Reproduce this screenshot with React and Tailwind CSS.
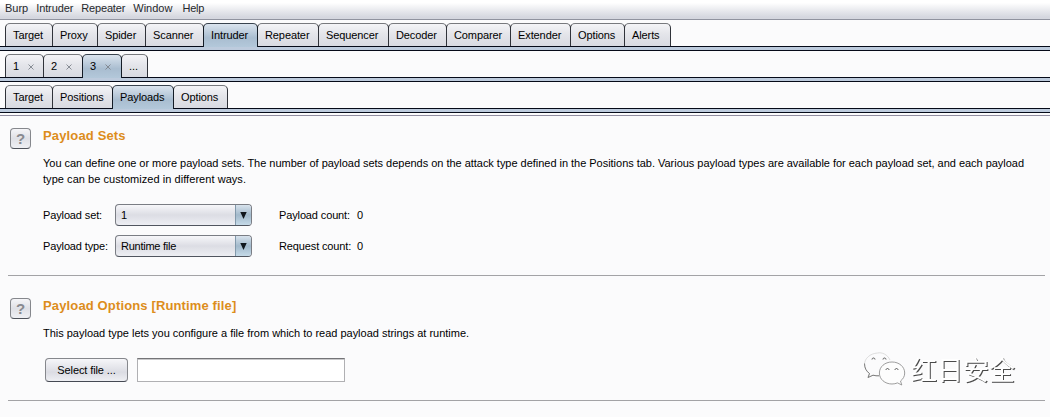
import React from "react";

const mainTabs = [
  ["Target", "w-[48px]"],
  ["Proxy", "w-[46px]"],
  ["Spider", "w-[49px]"],
  ["Scanner", "w-[59px]"],
  ["Intruder", "w-[55px]"],
  ["Repeater", "w-[62px]"],
  ["Sequencer", "w-[71px]"],
  ["Decoder", "w-[59px]"],
  ["Comparer", "w-[65px]"],
  ["Extender", "w-[61px]"],
  ["Options", "w-[55px]"],
  ["Alerts", "w-[47px]"],
];
const attackTabs = [
  ["1", "w-[39px]", true],
  ["2", "w-[40px]", true],
  ["3", "w-[40px]", true],
  ["...", "w-[27px]"],
];
const subTabs = [
  ["Target", "w-[48px]"],
  ["Positions", "w-[61px]"],
  ["Payloads", "w-[62px]"],
  ["Options", "w-[55px]"],
];

function Tab({ label, width, closable, active }) {
  return (
    <div
      className={`${width} -mr-px flex shrink-0 items-center rounded-t-[5px] border border-b-0 pl-[7px] tracking-[-0.1px] ${
        active
          ? "z-10 h-6 border-x-[#141c26] border-t-[#39434e] bg-linear-to-b from-[#dbe4ee] via-[#a9bdd0] via-60% to-[#b3c8da]"
          : "h-[23px] border-x-[#30333a] border-t-[#77797d] bg-linear-to-b from-[#f4f4f7] via-[#e4e5ea] via-45% to-[#d8dae1]"
      }`}
    >
      <span className={active ? "-mt-px" : ""}>{label}</span>
      {closable && (
        <svg className="mt-px ml-[9px] h-[6px] w-[6px]" viewBox="0 0 6 6">
          <path d="M.5.5l5 5M5.5.5l-5 5" stroke="#7d828a" strokeWidth=".9" />
        </svg>
      )}
    </div>
  );
}

function TabRow({ tabs, active }) {
  return (
    <div className="h-[31px] pt-[3px]">
      <div className="flex h-[23px] items-start pl-[5px]">
        {tabs.map(([label, width, closable]) => (
          <Tab key={label} label={label} width={width} closable={closable} active={label === active} />
        ))}
      </div>
      <div className="h-[5px] border-y border-[#050a18] bg-[#bdcbdd]" />
    </div>
  );
}

function Help() {
  return (
    <button className="mt-[2px] ml-[10px] flex h-[21px] w-[21px] shrink-0 items-center justify-center rounded-[4px] border border-[#85878c] border-b-[#4e525a] bg-linear-to-b from-[#f5f5f8] via-[#dfe0e6] via-50% to-[#eff0f4] text-[15px] leading-none font-bold text-[#888a90]">
      ?
    </button>
  );
}

function Select({ value }) {
  return (
    <div className="flex h-[22px] w-[137px] overflow-hidden rounded-[4px] border border-[#7a7d84] border-b-[#50555f] bg-linear-to-b from-[#f7f7fa] via-[#dcdde4] via-50% to-[#edeef3]">
      <span className="flex flex-1 items-center pl-[5px] tracking-[-0.25px]">{value}</span>
      <span className="flex w-4 items-center justify-center border-l border-[#8299ab] bg-linear-to-b from-[#d8e3ed] via-[#a2b9cb] via-50% to-[#c5dae8]">
        <svg className="h-[7px] w-[7px]" viewBox="0 0 7 7">
          <path d="M.3 0h6.400L3.500 7z" fill="#10161c" />
        </svg>
      </span>
    </div>
  );
}

function Watermark() {
  return (
    <div className="absolute top-[350px] left-[862px] flex items-center">
      <svg className="h-[38px] w-[46px]" viewBox="0 0 46 38" fill="none">
        <path
          d="M28 10C25.500 4.500 20 2 15.500 3C8 3.500 2.500 8.500 2.500 14.500c0 4 2 7 5 9L6 27.500l5-2.300c2 .6 4 .7 6.200.6"
          stroke="#d0d0d0"
          strokeWidth=".7"
        />
        <path d="M2.500 13.500c0 4.500 2 8 5 10L6 27.500l5-2.300c2 .6 4 .7 6.200.6" stroke="#707070" strokeWidth=".9" />
        <path
          d="M30 12c-7.200 0-12.600 4.800-12.600 11s5.400 11 12.600 11c2 0 3.800-.4 5.500-1.100l4.300 2.100-1.300-4c2.700-2 4.200-4.800 4.200-8C42.700 16.800 37.200 12 30 12z"
          fill="#fdfdfd"
          stroke="#858585"
          strokeWidth=".8"
        />
        <path
          d="M10 9.500c0-2 3-2 3 0M21 9.500c0-2 3-2 3 0M24 20c0-2 3-2 3 0M33 20c0-2 3-2 3 0"
          stroke="#555"
          strokeWidth="1"
        />
      </svg>
      <span className="ml-[3px] font-['Noto_Sans_CJK_SC',sans-serif] text-[26px] leading-[38px] font-normal text-white drop-shadow-[1px_1px_0_#4a4a4a]">
        红日安全
      </span>
    </div>
  );
}

export default function App() {
  return (
    <div className="relative h-[417px] w-[1050px] overflow-hidden bg-[#fbfbfc] font-['Liberation_Sans',Arial,sans-serif] text-[11px] leading-4 text-black">
      <div className="flex h-5 gap-2 border-b border-[#90939f] bg-linear-to-b from-white from-15% to-[#d5d7df] to-90% pl-[5px] text-[#26282c]">
        <span>Burp</span>
        <span className="tracking-[-0.12px]">Intruder</span>
        <span className="tracking-[-0.15px]">Repeater</span>
        <span className="mr-[2px]">Window</span>
        <span className="tracking-[-0.2px]">Help</span>
      </div>
      <TabRow tabs={mainTabs} active="Intruder" />
      <TabRow tabs={attackTabs} active="3" />
      <TabRow tabs={subTabs} active="Payloads" />
      <div className="mt-[2px] h-px bg-[#918da0]" />

      <section className="mr-[5px] flex h-[159px] pt-[10px]">
        <Help />
        <div className="ml-3">
          <h2 className="mt-px text-[13px] leading-[18px] font-bold tracking-[0.15px] text-[#dd8d1b]">Payload Sets</h2>
          <p className="mt-[10px] whitespace-nowrap">
            <span className="tracking-[-0.026px]">
              You can define one or more payload sets. The number of payload sets depends on the attack type defined in
              the Positions tab. Various payload types are available for each payload set, and each payload
            </span>
            <br />
            <span className="tracking-[0.05px]">type can be customized in different ways.</span>
          </p>
          <div className="mt-[17px] grid grid-cols-[72px_164px_78px_20px] items-center gap-y-[9px] tracking-[-0.13px]">
            <span>Payload set:</span>
            <Select value="1" />
            <span>Payload count:</span>
            <span>0</span>
            <span>Payload type:</span>
            <Select value="Runtime file" />
            <span>Request count:</span>
            <span>0</span>
          </div>
        </div>
      </section>
      <div className="mr-[5px] ml-2 h-px bg-[#a3a3a6]" />
      <section className="flex h-[124px] pt-[20px]">
        <Help />
        <div className="ml-3">
          <h2 className="mt-px text-[13px] leading-[18px] font-bold tracking-[0.14px] text-[#dd8d1b]">
            Payload Options [Runtime file]
          </h2>
          <p className="mt-[10px] tracking-[-0.015px]">
            This payload type lets you configure a file from which to read payload strings at runtime.
          </p>
          <div className="mt-[17px] ml-[2px] flex items-center gap-[9px]">
            <button className="h-6 w-[83px] rounded-[4px] border border-[#85878c] border-b-[#454953] bg-linear-to-b from-[#f6f6f9] via-[#dbdce3] via-60% to-[#eeeff3] tracking-[-0.1px]">
              Select file ...
            </button>
            <input className="h-6 w-[208px] border border-[#b0b0b3] border-t-[#747477] bg-white shadow-[inset_0_1px_0_#c9c9cb]" />
          </div>
        </div>
      </section>
      <div className="mr-[5px] ml-2 h-px bg-[#a3a3a6]" />
      <Watermark />
    </div>
  );
}
